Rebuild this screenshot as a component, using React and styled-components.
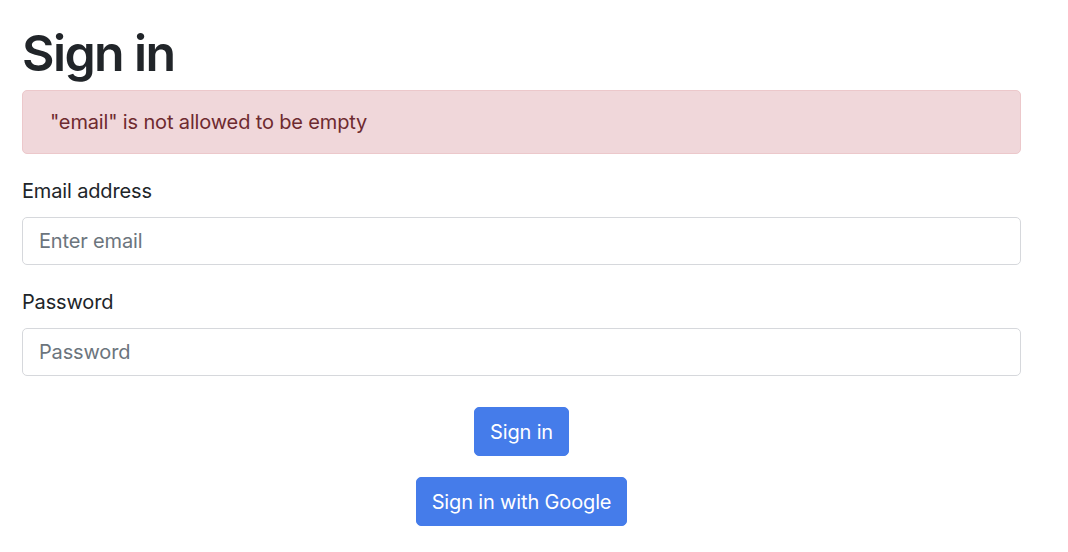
import React from "react";
import styled, { createGlobalStyle } from "styled-components";

const Global = createGlobalStyle`
  html, body { margin: 0; padding: 0; background: #fff; }
  body {
    font-family: Inter, "Liberation Sans", Arial, sans-serif;
    font-size: 20px;
    line-height: 1.5;
    letter-spacing: -0.15px;
    color: #212529;
  }
  * { box-sizing: border-box; }
`;

const Page = styled.div`
  width: 999px;
  margin-left: 22px;
  padding-top: 23px;
`;

const Title = styled.h1`
  margin: 0 0 7px;
  font-size: 50px;
  font-weight: 600;
  line-height: 60px;
  letter-spacing: -1.6px;
  color: #212529;
`;

const Alert = styled.div`
  height: 64px;
  padding: 16px 27px;
  margin-bottom: 22px;
  border: 1px solid #ecc8cb;
  border-radius: 5px;
  background: #f0d7da;
  color: #6e2a2f;
  line-height: 30px;
`;

const Form = styled.form`
  display: flex;
  flex-direction: column;
`;

const Group = styled.div`
  display: flex;
  flex-direction: column;
  margin-bottom: ${(p) => p.$mb}px;
`;

const Label = styled.label`
  line-height: 30px;
  margin-bottom: 11px;
  color: #212529;
`;

const Input = styled.input`
  height: 48px;
  width: 100%;
  padding: 0 16px;
  font-family: inherit;
  font-size: 20px;
  letter-spacing: inherit;
  color: #495057;
  border: 1px solid #d6d8dc;
  border-radius: 5px;
  background: #fff;
  outline: none;
  &::placeholder { color: #6c757d; }
`;

const Actions = styled.div`
  display: flex;
  flex-direction: column;
  align-items: center;
  gap: 21px;
  margin-top: 9px;
`;

const Button = styled.button`
  height: 49px;
  padding: 0 15px;
  font-family: inherit;
  font-size: 20px;
  letter-spacing: inherit;
  line-height: 30px;
  color: #fff;
  background: #457cea;
  border: 1px solid #457cea;
  border-radius: 5px;
  cursor: pointer;
`;

export default function App() {
  return (
    <>
      <Global />
      <Page>
        <Title>Sign in</Title>
        <Alert>"email" is not allowed to be empty</Alert>
        <Form onSubmit={(e) => e.preventDefault()}>
          <Group $mb={22}>
            <Label htmlFor="email">Email address</Label>
            <Input id="email" type="email" placeholder="Enter email" />
          </Group>
          <Group $mb={22}>
            <Label htmlFor="password">Password</Label>
            <Input id="password" type="password" placeholder="Password" />
          </Group>
          <Actions>
            <Button type="submit">Sign in</Button>
            <Button type="button">Sign in with Google</Button>
          </Actions>
        </Form>
      </Page>
    </>
  );
}
